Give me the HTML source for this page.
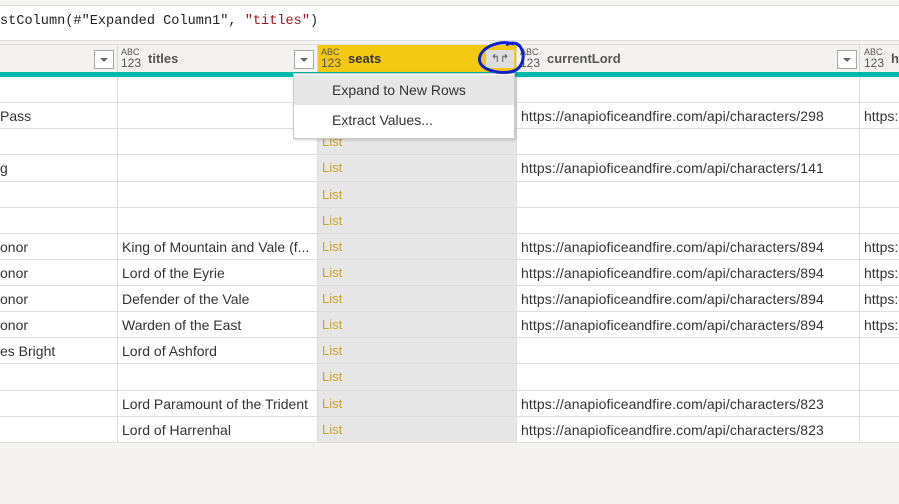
<!DOCTYPE html>
<html><head><style>
body{margin:0;width:899px;height:504px;background:#f3f2f1;font-family:"Liberation Sans",sans-serif;position:relative;overflow:hidden;color:#333}
.fb{position:absolute;left:0;top:5px;width:899px;height:34px;background:#fff;border-top:1px solid #ddd;border-bottom:1px solid #ddd}
.fb span{position:absolute;left:0;top:8px;font-family:"Liberation Mono",monospace;font-size:13.6px;color:#222}
.hdr{position:absolute;top:44px;height:28px;background:#f3f2f1;border-right:1px solid #d6d6d6;border-top:1px solid #ddd}
.teal{position:absolute;left:0;top:72px;width:899px;height:5px;background:#01b8aa}
.ty{position:absolute;top:3px;font-size:9px;line-height:9px;color:#555;}
.ty b{font-weight:normal;font-size:12px;line-height:12px;display:block}
.hn{position:absolute;top:6px;font-size:13px;font-weight:bold;color:#555}
.dd{position:absolute;top:5px;width:18px;height:17px;border:1px solid #aaa;background:#fff}
.dd:after{content:"";position:absolute;left:5px;top:7px;border:4px solid transparent;border-top:4px solid #666}
.grid{position:absolute;left:0;top:77px;width:899px}
.row{position:relative;height:25.14px;border-bottom:1px solid #ddd;background:#fff}
.c{position:absolute;top:0;height:100%;border-right:1px solid #ddd;font-size:14px;line-height:26px;white-space:nowrap;overflow:hidden;box-sizing:border-box;padding-left:4px}
.c1{left:0;width:118px;padding-left:0}.c2{left:118px;width:200px}.c3{left:318px;width:199px;background:#e6e6e6;color:#c9a227;font-size:13px}.c4{left:517px;width:343px;letter-spacing:0.1px}.c5{left:860px;width:40px}
.menu{position:absolute;left:293px;top:73px;width:220px;height:64px;background:#fff;border:1px solid #ccc;box-shadow:1px 1px 3px rgba(0,0,0,.2);font-size:14px;color:#333}
.menu div{height:30px;line-height:30px;padding-left:38px}
</style></head><body>
<div class="fb"><span>stColumn(#"Expanded Column1", <span style="position:static;color:#a31515">"titles"</span>)</span></div>
<div class="hdr" style="left:0;width:117px"><div class="dd" style="left:94px"></div></div>
<div class="hdr" style="left:118px;width:199px"><div class="ty" style="left:3px">ABC<b>123</b></div><div class="hn" style="left:30px">titles</div><div class="dd" style="left:176px"></div></div>
<div class="hdr" style="left:318px;width:198px;background:#f2c811"><div class="ty" style="left:3px">ABC<b>123</b></div><div class="hn" style="left:30px;color:#333">seats</div><div style="position:absolute;left:168px;top:5px;width:28px;height:18px;background:#ddd;font-size:11px;text-align:center;color:#555;line-height:18px">↰↱</div></div>
<div class="hdr" style="left:517px;width:342px"><div class="ty" style="left:3px">ABC<b>123</b></div><div class="hn" style="left:30px">currentLord</div><div class="dd" style="left:320px"></div></div>
<div class="hdr" style="left:860px;width:39px"><div class="ty" style="left:4px">ABC<b>123</b></div><div class="hn" style="left:31px">h</div></div>
<div class="teal"></div>
<div class="grid">
<div class="row"><div class="c c1"></div><div class="c c2"></div><div class="c c3"></div><div class="c c4"></div><div class="c c5"></div></div>
<div class="row"><div class="c c1">Pass</div><div class="c c2"></div><div class="c c3">List</div><div class="c c4">https://anapioficeandfire.com/api/characters/298</div><div class="c c5">https:</div></div>
<div class="row"><div class="c c1"></div><div class="c c2"></div><div class="c c3">List</div><div class="c c4"></div><div class="c c5"></div></div>
<div class="row"><div class="c c1">g</div><div class="c c2"></div><div class="c c3">List</div><div class="c c4">https://anapioficeandfire.com/api/characters/141</div><div class="c c5"></div></div>
<div class="row"><div class="c c1"></div><div class="c c2"></div><div class="c c3">List</div><div class="c c4"></div><div class="c c5"></div></div>
<div class="row"><div class="c c1"></div><div class="c c2"></div><div class="c c3">List</div><div class="c c4"></div><div class="c c5"></div></div>
<div class="row"><div class="c c1">onor</div><div class="c c2">King of Mountain and Vale (f...</div><div class="c c3">List</div><div class="c c4">https://anapioficeandfire.com/api/characters/894</div><div class="c c5">https:</div></div>
<div class="row"><div class="c c1">onor</div><div class="c c2">Lord of the Eyrie</div><div class="c c3">List</div><div class="c c4">https://anapioficeandfire.com/api/characters/894</div><div class="c c5">https:</div></div>
<div class="row"><div class="c c1">onor</div><div class="c c2">Defender of the Vale</div><div class="c c3">List</div><div class="c c4">https://anapioficeandfire.com/api/characters/894</div><div class="c c5">https:</div></div>
<div class="row"><div class="c c1">onor</div><div class="c c2">Warden of the East</div><div class="c c3">List</div><div class="c c4">https://anapioficeandfire.com/api/characters/894</div><div class="c c5">https:</div></div>
<div class="row"><div class="c c1">es Bright</div><div class="c c2">Lord of Ashford</div><div class="c c3">List</div><div class="c c4"></div><div class="c c5"></div></div>
<div class="row"><div class="c c1"></div><div class="c c2"></div><div class="c c3">List</div><div class="c c4"></div><div class="c c5"></div></div>
<div class="row"><div class="c c1"></div><div class="c c2">Lord Paramount of the Trident</div><div class="c c3">List</div><div class="c c4">https://anapioficeandfire.com/api/characters/823</div><div class="c c5"></div></div>
<div class="row"><div class="c c1"></div><div class="c c2">Lord of Harrenhal</div><div class="c c3">List</div><div class="c c4">https://anapioficeandfire.com/api/characters/823</div><div class="c c5"></div></div>
</div>
<div class="menu"><div style="background:#e6e6e6;margin-top:1px">Expand to New Rows</div><div>Extract Values...</div></div>
<svg style="position:absolute;left:0;top:0" width="899" height="504"><path d="M514 44 C500 40 484 46 480 56 C476 68 494 74 510 72 C522 70 526 58 521 48 C518 42 511 42 506 45" fill="none" stroke="#1020d0" stroke-width="3"/></svg>
</body></html>
